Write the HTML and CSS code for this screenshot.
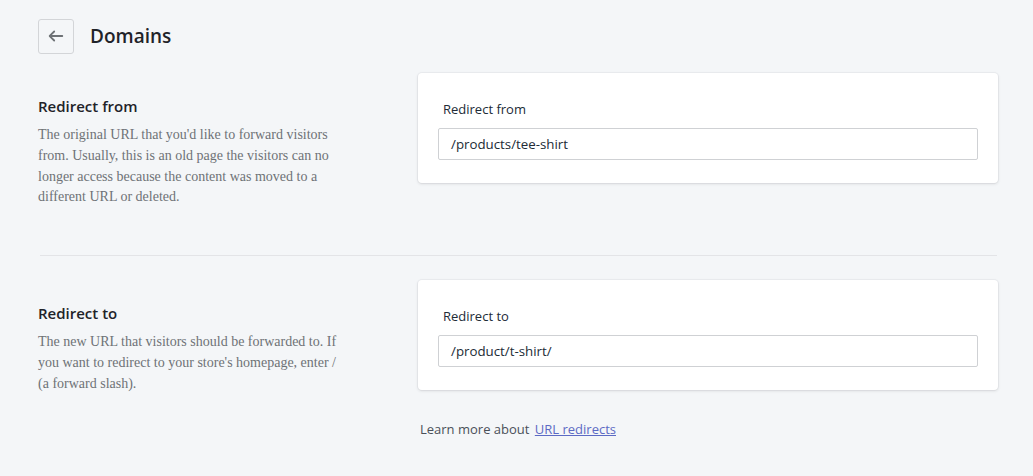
FILE: index.html
```html
<!DOCTYPE html>
<html lang="en">
<head>
<meta charset="utf-8">
<title>Domains</title>
<link rel="stylesheet" href="styles.css">
</head>
<body>
<div class="page">
  <header class="header">
    <button class="back" aria-label="Back">
      <svg width="18" height="18" viewBox="0 0 20 20" aria-hidden="true">
        <path d="M17 9H5.414l3.293-3.293a.999.999 0 1 0-1.414-1.414l-5 5a.999.999 0 0 0 0 1.414l5 5a.997.997 0 0 0 1.414 0 .999.999 0 0 0 0-1.414L5.414 11H17a1 1 0 1 0 0-2z" fill="#6d7175"/>
      </svg>
    </button>
    <h1 class="title">Domains</h1>
  </header>

  <section class="section first">
    <div class="annotation">
      <h2 class="heading">Redirect from</h2>
      <p class="desc">The original URL that you'd like to forward visitors from. Usually, this is an old page the visitors can no longer access because the content was moved to a different URL or deleted.</p>
    </div>
    <div class="card">
      <label class="label">Redirect from</label>
      <div class="input">/products/tee-shirt</div>
    </div>
  </section>

  <hr class="divider">

  <section class="section second">
    <div class="annotation">
      <h2 class="heading">Redirect to</h2>
      <p class="desc">The new URL that visitors should be forwarded to. If you want to redirect to your store's homepage, enter / (a forward slash).</p>
    </div>
    <div class="right">
      <div class="card">
        <label class="label">Redirect to</label>
        <div class="input">/product/t-shirt/</div>
      </div>
      <p class="learn">Learn more about <a href="#">URL redirects</a></p>
    </div>
  </section>
</div>
</body>
</html>
```

FILE: styles.css
```css
html, body {
  margin: 0;
  padding: 0;
  background: #f4f6f8;
}

body {
  font-family: "Open Sans", "Noto Sans", sans-serif;
  color: #212b36;
}

.page {
  width: 960px;
  padding: 18px 0 0 38px;
}

.header {
  display: flex;
  align-items: center;
  gap: 16px;
  height: 36px;
}

.back {
  width: 36px;
  height: 35px;
  display: flex;
  align-items: center;
  justify-content: center;
  padding: 0;
  border: 1px solid #d3d5d8;
  border-radius: 3px;
  background: transparent;
}

.title {
  margin: 0;
  font-size: 19px;
  font-weight: 600;
  line-height: 28px;
  color: #1f2329;
}

.section {
  display: grid;
  grid-template-columns: 360px 580px;
  gap: 20px;
  align-items: start;
}

.section.first {
  margin-top: 19px;
  padding-bottom: 47px;
}

.divider {
  margin: 0 0 0 2px;
  width: 957px;
  height: 0;
  border: 0;
  border-top: 1px solid #e3e4e7;
}

.section.second {
  margin-top: 24px;
}

.annotation {
  padding-top: 21px;
}

.heading {
  margin: 0;
  font-size: 15px;
  font-weight: 600;
  line-height: 24px;
  color: #1f2329;
}

.desc {
  margin: 7px 0 0;
  width: 310px;
  font-family: "Liberation Serif", "Times New Roman", serif;
  font-size: 14px;
  line-height: 20.8px;
  color: #6e7276;
}

.card {
  background: #fff;
  border-radius: 4px;
  box-shadow: 0 0 0 1px rgba(63, 63, 68, 0.04), 0 1px 3px 0 rgba(63, 63, 68, 0.15);
  padding: 26px 20px 23px;
}

.label {
  display: block;
  padding-left: 5px;
  font-size: 13px;
  line-height: 20px;
  margin-bottom: 9px;
  color: #212b36;
}

.input {
  height: 30px;
  border: 1px solid #cfd1d4;
  border-radius: 2px;
  padding-left: 12px;
  font-size: 13.3px;
  line-height: 30px;
  color: #212b36;
}

.learn {
  margin: 29px 0 0 2px;
  font-size: 13px;
  line-height: 20px;
  color: #4a5058;
}

.learn a {
  color: #5c6ac4;
  text-decoration: underline;
  margin-left: 2px;
}
```
